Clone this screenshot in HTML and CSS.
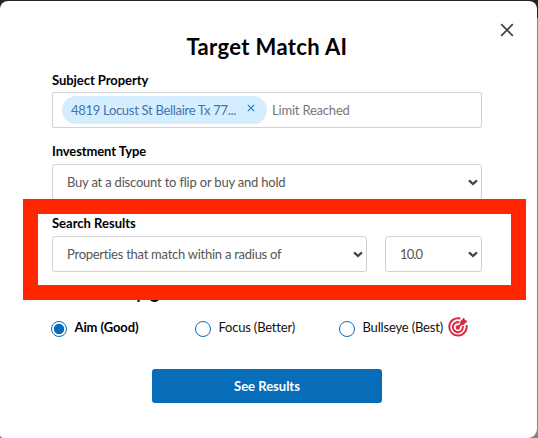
FILE: index.html
```
<!DOCTYPE html>
<html lang="en">
<head>
    <meta charset="UTF-8">
    <meta name="viewport" content="width=device-width, initial-scale=1.0">
    <title>Target Match AI</title>
    <link rel="stylesheet" href="styles.css">
</head>
<body>
    <main class="modal">
        <button class="close" aria-label="Close">
            <svg width="14" height="14" viewBox="0 0 14 14"><path d="M1.2 1.2l11.6 11.6M12.8 1.2L1.2 12.8"/></svg>
        </button>

        <h1>Target Match AI</h1>

        <form>
            <section class="field">
                <label class="label-subject" for="subject">Subject Property</label>
                <div class="tag-input">
                    <span class="tag">
                        <span class="tag-text">4819 Locust St Bellaire Tx 77...</span>
                        <svg width="8" height="8" viewBox="0 0 8 8"><path d="M.8.8l6.4 6.4M7.2.8L.8 7.2"/></svg>
                    </span>
                    <input id="subject" type="text" placeholder="Limit Reached">
                </div>
            </section>

            <section class="field">
                <label for="type">Investment Type</label>
                <div class="select">
                    <select id="type" class="type-select"><option>Buy at a discount to flip or buy and hold</option></select>
                    <svg width="10" height="7" viewBox="0 0 10 7"><path d="M1 1.3l4 3.7 4-3.7"/></svg>
                </div>
            </section>

            <section class="field">
                <label class="label-search" for="search">Search Results</label>
                <div class="row">
                    <div class="select">
                        <select id="search" class="search-select"><option>Properties that match within a radius of</option></select>
                        <svg width="10" height="7" viewBox="0 0 10 7"><path d="M1 1.3l4 3.7 4-3.7"/></svg>
                    </div>
                    <div class="select radius">
                        <select aria-label="Radius"><option>10.0</option></select>
                        <svg width="10" height="7" viewBox="0 0 10 7"><path d="M1 1.3l4 3.7 4-3.7"/></svg>
                    </div>
                </div>
                <div class="highlight"></div>
            </section>

            <div class="info">
                <svg width="28" height="14" viewBox="0 0 28 14"><path d="M3.5 9.5l-1 3.5H1.5"/><circle cx="18.5" cy="7.5" r="5.5"/></svg>
            </div>

            <section class="options">
                <label class="selected"><input type="radio" name="accuracy" checked><span class="aim">Aim (Good)</span></label>
                <label><input type="radio" name="accuracy"><span class="focus">Focus (Better)</span></label>
                <label>
                    <input type="radio" name="accuracy"><span class="bullseye">Bullseye (Best)</span>
                    <svg class="target" width="20" height="20" viewBox="0 0 20 20">
                        <path d="M12.4 1.5A8.7 8.7 0 1 0 18.5 8M11.4 5.4A5 5 0 1 0 14.7 9"/>
                        <path d="M9.5 10.8L14.5 5.8"/>
                        <circle cx="9.8" cy="10.5" r="1.2"/>
                        <path class="arrow" d="M12.2 4.6L16 .6l.9 2.5 2.7.9-4 4-3.1-.3z"/>
                    </svg>
                </label>
            </section>

            <button class="submit" type="button">See Results</button>
        </form>
    </main>
</body>
</html>
```
FILE: styles.css
```
* {
    box-sizing: border-box;
}

body {
    margin: 0;
    height: 438px;
    padding: 1px 1px 0 0;
    overflow: hidden;
    background: linear-gradient(#24232c 18px, #858585 18px);
    font-family: Lato, "Liberation Sans", sans-serif;
    font-size: 13px;
    color: #111;
}

.modal {
    position: relative;
    height: 437px;
    padding: 31px 55px 0 52px;
    background: white;
    border-radius: 8px 8px 9px 4px;
}

h1 {
    margin: 0 0 10px;
    font-size: 22px;
    line-height: 30px;
    letter-spacing: 0.36px;
    text-align: center;
    color: #000;
}

.close {
    position: absolute;
    top: 22px;
    right: 23px;
    width: 14px;
    height: 14px;
    padding: 0;
    border: none;
    background: none;
}

svg {
    display: block;
    fill: none;
    stroke: #444;
    stroke-width: 1.7;
}

.field {
    position: relative;
    margin-bottom: 16px;
}

.field > label {
    display: block;
    height: 16px;
    margin-bottom: 4px;
    line-height: 15px;
    letter-spacing: -0.1px;
    font-weight: bold;
    color: #000;
}

.field > .label-subject {
    line-height: 16px;
    letter-spacing: -0.05px;
}

.field > .label-search {
    letter-spacing: 0;
}

.tag-input {
    display: flex;
    align-items: center;
    height: 36px;
    padding: 0 9px;
    border: 1px solid #d0d1d5;
    border-radius: 2px;
}

.tag {
    display: flex;
    justify-content: space-between;
    flex: 0 0 205px;
    height: 28px;
    padding: 0 12px 0 9px;
    border-radius: 14px;
    background: #d5eeff;
    color: #3f74ad;
    line-height: 28px;
}

.tag-text {
    letter-spacing: -0.3px;
    white-space: nowrap;
}

.tag svg {
    flex: none;
    margin-top: 8px;
    stroke: #1e82ca;
    stroke-width: 1.2;
}

.tag-input input {
    width: 150px;
    padding: 0 0 0 5px;
    border: none;
    outline: none;
    font: inherit;
    letter-spacing: -0.2px;
}

.tag-input input::placeholder {
    color: #777;
}

.row {
    display: flex;
    gap: 18px;
}

.select {
    position: relative;
    flex: 1;
}

.radius {
    flex: 0 0 97px;
}

.select select {
    display: block;
    width: 100%;
    height: 36px;
    padding: 0 14px;
    appearance: none;
    border: 1px solid #d0d1d5;
    border-radius: 3px;
    background: white;
    color: #555;
    font: inherit;
    letter-spacing: -0.2px;
}

.select .search-select {
    letter-spacing: -0.26px;
}

.radius select {
    letter-spacing: -0.9px;
}

.select svg {
    position: absolute;
    top: 15px;
    right: 4px;
    stroke-width: 2.3;
}

/* Red frame laid over the search fields */
.highlight {
    position: absolute;
    top: -17px;
    left: -29px;
    width: 503px;
    height: 101px;
    border: 15px solid #ff2600;
    pointer-events: none;
}

.info {
    height: 14px;
    margin: 0 0 16px 84px;
}

.info svg {
    stroke: #000;
    stroke-width: 2;
}

.options {
    display: grid;
    grid-template-columns: 144px 144px 1fr;
    height: 20px;
    margin-left: -1px;
}

.options label {
    display: flex;
    align-items: center;
    white-space: nowrap;
}

.options span {
    position: relative;
    top: -1px;
}

.options .aim {
    letter-spacing: -0.1px;
}

.options .focus {
    letter-spacing: -0.2px;
}

.options .bullseye {
    letter-spacing: -0.17px;
}

.options input {
    flex: none;
    appearance: none;
    width: 16px;
    height: 16px;
    margin: 1px 7.5px 0 0;
    border: 1px solid #086db8;
    border-radius: 50%;
}

.options input:checked {
    background: radial-gradient(circle, #086db8 4.8px, white 5.6px);
}

.selected {
    font-weight: bold;
    color: #000;
}

.target {
    flex: none;
    margin: -2px 0 0 5px;
    stroke: #d92b42;
    stroke-width: 2;
}

.target .arrow {
    fill: #d92b42;
    stroke: none;
}

.submit {
    display: block;
    width: 230px;
    height: 34px;
    margin: 31px auto 0 100px;
    border: none;
    border-radius: 3px;
    background: #086db8;
    color: white;
    font: bold 13px Lato, "Liberation Sans", sans-serif;
}
```
